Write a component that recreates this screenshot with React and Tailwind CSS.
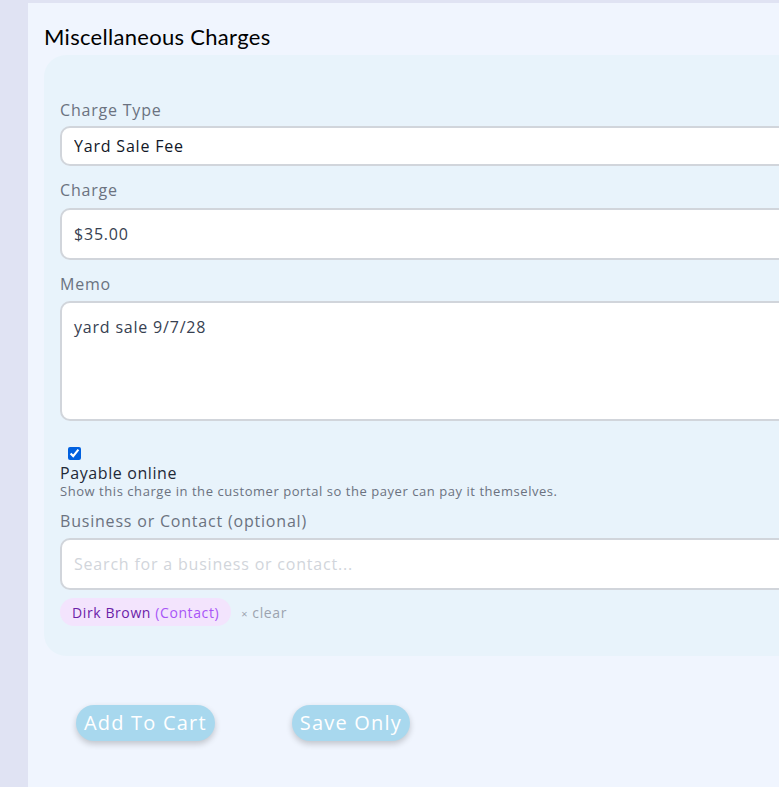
export default function App() {
  const label = "block text-[16px] tracking-[0.8px] text-[#6b7280] leading-6";
  const input = "w-full bg-white border-2 border-[#d1d5db] rounded-[10px] px-3 text-[16px] tracking-[0.8px] outline-none";
  return (
    <div className="w-[779px] h-[787px] overflow-hidden bg-[#e0e3f3] pl-[28px] pt-[3px]" style={{ fontFamily: '"Open Sans", "Noto Sans", sans-serif' }}>
      <div className="w-[900px] h-[800px] bg-[#f0f5fe] pl-[16px] pt-[20px]">
        <h2 className="text-[22px] leading-7 text-black mb-[4px] tracking-[0.3px]" style={{ fontFamily: 'Lato, sans-serif' }}>Miscellaneous Charges</h2>
        <div className="w-[860px] bg-[#e8f3fb] rounded-[22px] pl-[16px] pr-[40px] pt-[43px] pb-[30px]">
          <label className={label}>Charge Type</label>
          <input className={`${input} h-[40px] mt-[4px] text-[#111827]`} defaultValue="Yard Sale Fee" />
          <label className={`${label} mt-[12px]`}>Charge</label>
          <input className={`${input} h-[52px] mt-[6px] text-[#374151]`} defaultValue="$35.00" />
          <label className={`${label} mt-[12px]`}>Memo</label>
          <textarea className={`${input} h-[120px] mt-[5px] pt-[12px] resize-none text-[#374151]`} defaultValue="yard sale 9/7/28" />
          <input type="checkbox" defaultChecked className="block ml-[8px] mt-[20px] w-[13px] h-[13px] accent-[#0060df]" />
          <div className="text-[16px] text-[#1f2937] leading-5 mt-[3px] tracking-[0.6px]">Payable online</div>
          <div className="text-[13px] text-[#6b7280] leading-4 tracking-[0.55px]">Show this charge in the customer portal so the payer can pay it themselves.</div>
          <label className={`${label} mt-[10px]`}>Business or Contact (optional)</label>
          <input className={`${input} h-[52px] mt-[5px] placeholder:text-[#d1d5db]`} placeholder="Search for a business or contact..." />
          <div className="flex items-center gap-[10px] mt-[8px]">
            <span className="bg-[#f3e4fd] rounded-full px-[12px] h-[28px] flex items-center text-[14px] tracking-[0.6px] text-[#6b21a8]">
              Dirk Brown&nbsp;<span className="text-[#a855f7]">(Contact)</span>
            </span>
            <span className="text-[14px] text-[#9ca3af] tracking-[0.6px]"><span className="text-[11px]">×</span> clear</span>
          </div>
        </div>
        <div className="flex gap-[77px] ml-[32px] mt-[49px]">
          <button className="h-[36px] px-[8px] rounded-full bg-[#a8d8ee] text-white text-[20px] tracking-[1.2px] shadow-[0_3px_6px_rgba(0,0,0,0.2)]">Add To Cart</button>
          <button className="h-[36px] px-[8px] rounded-full bg-[#a8d8ee] text-white text-[20px] tracking-[1.2px] shadow-[0_3px_6px_rgba(0,0,0,0.2)]">Save Only</button>
        </div>
      </div>
    </div>
  );
}
